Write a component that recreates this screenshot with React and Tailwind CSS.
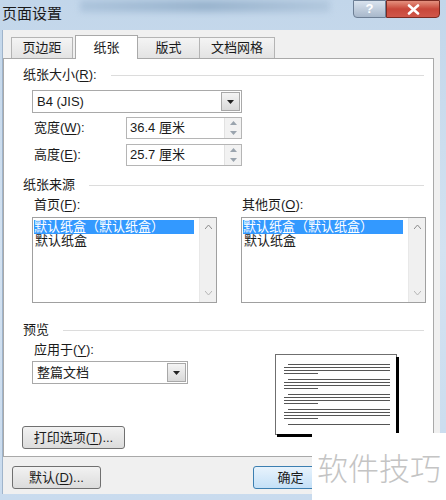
import { ChevronDown } from 'lucide-react'

const Mn = ({ children }) => <span className="underline underline-offset-2">{children}</span>

function Header({ label, className = '' }) {
  return (
    <div className={`flex items-center h-[14px] pl-[19px] pr-[9px] ${className}`}>
      <span className="text-[13px] leading-[14px]">{label}</span>
      <div className="flex-1 ml-[14px] border-t border-[#dcdcdc]" />
    </div>
  )
}

function DropBtn() {
  return (
    <div className="w-[19px] h-[19px] mr-[1px] flex items-center justify-center border border-[#a8a8a8] bg-gradient-to-b from-[#f4f4f4] to-[#d9d9d9]">
      <svg width="7" height="4" viewBox="0 0 7 4"><path d="M0 0h7L3.5 4z" fill="#222" /></svg>
    </div>
  )
}

function Spin({ value }) {
  return (
    <div className="w-[116px] h-[22px] flex items-center border border-[#b5b5b5] bg-white">
      <span className="flex-1 pl-[3px] text-[13px]">{value}</span>
      <div className="w-[17px] h-[20px] flex flex-col border-l border-[#e2e2e2] bg-[#f2f2f2]">
        <div className="flex-1 flex items-center justify-center">
          <svg width="7" height="4" viewBox="0 0 7 4"><path d="M0 4h7L3.5 0z" fill="#9aa4ae" /></svg>
        </div>
        <div className="flex-1 flex items-center justify-center">
          <svg width="7" height="4" viewBox="0 0 7 4"><path d="M0 0h7L3.5 4z" fill="#9aa4ae" /></svg>
        </div>
      </div>
    </div>
  )
}

function ListBox() {
  return (
    <div className="w-[185px] h-[86px] flex border border-[#a0a0a0] bg-white">
      <div className="flex-1 pt-[2px] pl-[1px] text-[13px]">
        <div className="bg-[#3399ff] text-white w-[160px] h-[14px] leading-[14px] whitespace-nowrap overflow-hidden">默认纸盒（默认纸盒）</div>
        <div className="pl-[1px] h-[14px] leading-[14px]">默认纸盒</div>
      </div>
      <div className="w-[17px] flex flex-col justify-between items-center bg-[#f0f0f0] border-l border-[#e8e8e8] py-[7px]">
        <svg width="7" height="4" viewBox="0 0 7 4"><path d="M0 4l3.5-4L7 4" stroke="#8a8a8a" fill="none" /></svg>
        <svg width="7" height="4" viewBox="0 0 7 4"><path d="M0 0l3.5 4L7 0" stroke="#b5b5b5" fill="none" /></svg>
      </div>
    </div>
  )
}

function Preview() {
  const groups = [0, 1, 2, 3]
  return (
    <div className="relative w-[124px] h-[85px]">
      <div className="w-[122px] h-[81px] border border-[#6f6f6f] bg-white pt-[9px] pl-[8px] pr-[6px]">
        {groups.map((g) => (
          <div key={g} className="flex flex-col gap-[2px] mb-[5px]">
            <div className="h-px bg-[#555] ml-[4px]" />
            <div className="h-px bg-[#555]" />
            <div className="h-px bg-[#555]" />
            <div className="h-px bg-[#555] w-[34px]" />
          </div>
        ))}
        <div className="h-px bg-[#555] ml-[4px]" />
      </div>
      <div className="absolute left-[121px] top-[3px] w-[3px] h-[80px] bg-black" />
      <div className="absolute left-[2px] top-[80px] w-[122px] h-[3px] bg-black" />
    </div>
  )
}

export default function App() {
  return (
    <div className="relative w-[446px] h-[500px] overflow-hidden bg-gradient-to-b from-[#c2d6ea] via-[#d3e2f1] to-[#c9dbee] text-[#1a1a1a] font-['Liberation_Sans','Noto_Sans_CJK_SC',sans-serif]">
      {/* title bar */}
      <div className="h-[30px] flex items-start relative">
        <div className="absolute left-[80px] top-0 w-[250px] h-[12px] bg-gradient-to-r from-[#9fb9d3] via-[#7e9dbb] to-[#a8bfd6] opacity-60 blur-[3px]" />
        <span className="relative pl-[2px] pt-[5px] text-[15px] leading-[18px]">页面设置</span>
        <div className="ml-auto mr-[6px] flex h-[18px]">
          <div className="w-[33px] h-[18px] flex items-center justify-center rounded-bl-[4px] border border-[#6d7f95] bg-gradient-to-b from-[#d9e3ee] to-[#a8b8cb] text-white text-[13px] font-bold">?</div>
          <div className="w-[54px] h-[18px] flex items-center justify-center rounded-br-[4px] border border-[#7a2a22] bg-gradient-to-b from-[#e4907e] via-[#c8473a] to-[#d0574a]">
            <svg width="13" height="11" viewBox="0 0 13 11"><path d="M2 1.5l9 8M11 1.5l-9 8" stroke="#fff" strokeWidth="2.6" strokeLinecap="round" /></svg>
          </div>
        </div>
      </div>

      {/* body */}
      <div className="ml-[2px] mr-[6px] h-[464px] bg-[#f0f0f0] border-l border-[#9fb4cb] flex flex-col">
        {/* tabs */}
        <div className="flex items-end h-[28px] pl-[8px]">
          <div className="w-[62px] h-[21px] mr-[2px] flex items-center justify-center border border-b-0 border-[#b4b4b4] bg-gradient-to-b from-[#f4f4f4] to-[#e3e3e3] text-[13px]">页边距</div>
          <div className="w-[63px] h-[24px] mb-[-1px] z-10 flex items-center justify-center border border-b-0 border-[#a9a9a9] bg-white text-[13px]">纸张</div>
          <div className="w-[62px] h-[21px] flex items-center justify-center border border-b-0 border-l-0 border-[#b4b4b4] bg-gradient-to-b from-[#f4f4f4] to-[#e3e3e3] text-[13px]">版式</div>
          <div className="w-[75px] h-[21px] flex items-center justify-center border border-b-0 border-l-0 border-[#b4b4b4] bg-gradient-to-b from-[#f4f4f4] to-[#e3e3e3] text-[13px]">文档网格</div>
        </div>

        {/* panel */}
        <div className="w-[431px] h-[399px] border border-[#a9a9a9] bg-white flex flex-col text-[13px]">
          <Header label={<>纸张大小(<Mn>R</Mn>):</>} className="mt-[9px]" />
          <div className="ml-[28px] mt-[8px] w-[210px] h-[23px] flex items-center justify-between border border-[#a9a9a9] bg-white">
            <span className="pl-[4px]">B4 (JIS)</span>
            <DropBtn />
          </div>
          <div className="flex items-center mt-[4px] h-[22px]">
            <span className="ml-[30px] w-[92px]">宽度(<Mn>W</Mn>):</span>
            <Spin value="36.4 厘米" />
          </div>
          <div className="flex items-center mt-[5px] h-[22px]">
            <span className="ml-[30px] w-[92px]">高度(<Mn>E</Mn>):</span>
            <Spin value="25.7 厘米" />
          </div>

          <Header label="纸张来源" className="mt-[12px]" />
          <div className="flex mt-[6px] ml-[28px] gap-[24px]">
            <div className="flex flex-col">
              <span className="pl-[2px] h-[14px] leading-[14px]">首页(<Mn>F</Mn>):</span>
              <div className="mt-[5px]"><ListBox /></div>
            </div>
            <div className="flex flex-col">
              <span className="pl-[1px] h-[14px] leading-[14px]">其他页(<Mn>O</Mn>):</span>
              <div className="mt-[5px]"><ListBox /></div>
            </div>
          </div>

          <Header label="预览" className="mt-[20px]" />
          <div className="flex">
            <div className="flex flex-col">
              <span className="ml-[30px] mt-[6px] h-[14px] leading-[14px]">应用于(<Mn>Y</Mn>):</span>
              <div className="ml-[28px] mt-[4px] w-[156px] h-[23px] flex items-center justify-between border border-[#a9a9a9] bg-white">
                <span className="pl-[4px]">整篇文档</span>
                <DropBtn />
              </div>
              <div className="ml-[18px] mt-[42px] w-[103px] h-[23px] flex items-center justify-center rounded-[3px] border border-[#707070] bg-gradient-to-b from-[#f2f2f2] to-[#dcdcdc]">
                打印选项(<Mn>T</Mn>)...
              </div>
            </div>
            <div className="ml-[87px] mt-[17px]">
              <Preview />
            </div>
          </div>
        </div>

        {/* buttons */}
        <div className="flex mt-[9px] text-[13px]">
          <div className="ml-[9px] w-[89px] h-[23px] flex items-center justify-center rounded-[3px] border border-[#707070] bg-gradient-to-b from-[#f2f2f2] to-[#dcdcdc]">
            默认(<Mn>D</Mn>)...
          </div>
          <div className="ml-[152px] w-[75px] h-[23px] flex items-center justify-center rounded-[3px] border border-[#3c7fb1] bg-gradient-to-b from-[#e8f3fc] to-[#c4e0f7]">
            确定
          </div>
        </div>
      </div>

      {/* watermark */}
      <div className="absolute left-[312px] top-[433px] w-[134px] h-[67px] bg-white flex items-center justify-center">
        <span className="text-[31px] leading-none whitespace-nowrap text-[#c4c4c4] font-['Noto_Sans_CJK_SC',sans-serif] font-light">软件技巧</span>
      </div>
    </div>
  )
}
